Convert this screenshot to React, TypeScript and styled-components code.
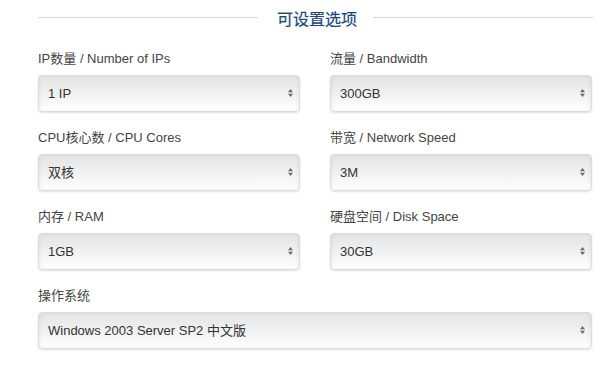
import React from 'react'
import styled, { createGlobalStyle } from 'styled-components'

const GlobalStyle = createGlobalStyle`
  body {
    margin: 0;
    background: #fff;
    font-family: 'Liberation Sans', Arial, 'Noto Sans CJK SC', sans-serif;
  }
`

const Page = styled.div`
  width: 555px;
  padding: 0 0 0 38px;
`

const TitleRow = styled.div`
  display: flex;
  align-items: center;
  height: 35px;
`

const Rule = styled.div`
  flex: 1;
  height: 1px;
  background: #d8d8d8;
`

const Title = styled.h3`
  margin: 0;
  padding: 0 16px 0 19px;
  font-size: 16px;
  font-weight: normal;
  color: #17487a;
  font-family: 'Noto Sans CJK SC', sans-serif;
  line-height: 20px;
  -webkit-text-stroke: 0.2px #17487a;
`

const Grid = styled.div`
  display: grid;
  grid-template-columns: 262px 262px;
  column-gap: 30px;
  padding-top: 15px;
`

const Field = styled.div<{ $wide?: boolean }>`
  grid-column: ${({ $wide }) => ($wide ? '1 / span 2' : 'auto')};
  margin-bottom: 17px;
`

const Label = styled.label`
  display: block;
  font-size: 13px;
  line-height: 18px;
  color: #444;
  margin-bottom: 7px;
`

const SelectWrap = styled.div`
  position: relative;
`

const Select = styled.select`
  appearance: none;
  -webkit-appearance: none;
  display: block;
  width: 100%;
  height: 37px;
  padding: 0 24px 0 9px;
  font-family: 'Liberation Sans', Arial, 'Noto Sans CJK SC', sans-serif;
  font-size: 13px;
  color: #333;
  border: 1px solid #dcdcdc;
  border-radius: 4px;
  background: linear-gradient(to bottom, #e4e4e4 0%, #f2f2f2 55%, #ffffff 100%);
  box-shadow: 0 1px 2px rgba(0, 0, 0, 0.12), inset 2px 0 3px rgba(0, 0, 0, 0.04), inset -2px 0 3px rgba(0, 0, 0, 0.04);
  outline: none;
`

const Arrows = styled.svg`
  position: absolute;
  right: 6px;
  top: 13px;
  pointer-events: none;
`

type Opt = { label: string; value: string; wide?: boolean }

const fields: Opt[] = [
  { label: 'IP数量 / Number of IPs', value: '1 IP' },
  { label: '流量 / Bandwidth', value: '300GB' },
  { label: 'CPU核心数 / CPU Cores', value: '双核' },
  { label: '带宽 / Network Speed', value: '3M' },
  { label: '内存 / RAM', value: '1GB' },
  { label: '硬盘空间 / Disk Space', value: '30GB' },
  { label: '操作系统', value: 'Windows 2003 Server SP2 中文版', wide: true },
]

function UpDown() {
  return (
    <Arrows width="7" height="10" viewBox="0 0 7 10">
      <path d="M3.5 1 L6 4.2 L1 4.2 Z" fill="#6a6a6a" />
      <path d="M3.5 9 L6 5.8 L1 5.8 Z" fill="#6a6a6a" />
    </Arrows>
  )
}

export default function App() {
  return (
    <>
      <GlobalStyle />
      <Page>
        <TitleRow>
          <Rule />
          <Title>可设置选项</Title>
          <Rule />
        </TitleRow>
        <Grid>
          {fields.map(f => (
            <Field key={f.label} $wide={f.wide}>
              <Label>{f.label}</Label>
              <SelectWrap>
                <Select defaultValue={f.value}>
                  <option value={f.value}>{f.value}</option>
                </Select>
                <UpDown />
              </SelectWrap>
            </Field>
          ))}
        </Grid>
      </Page>
    </>
  )
}
